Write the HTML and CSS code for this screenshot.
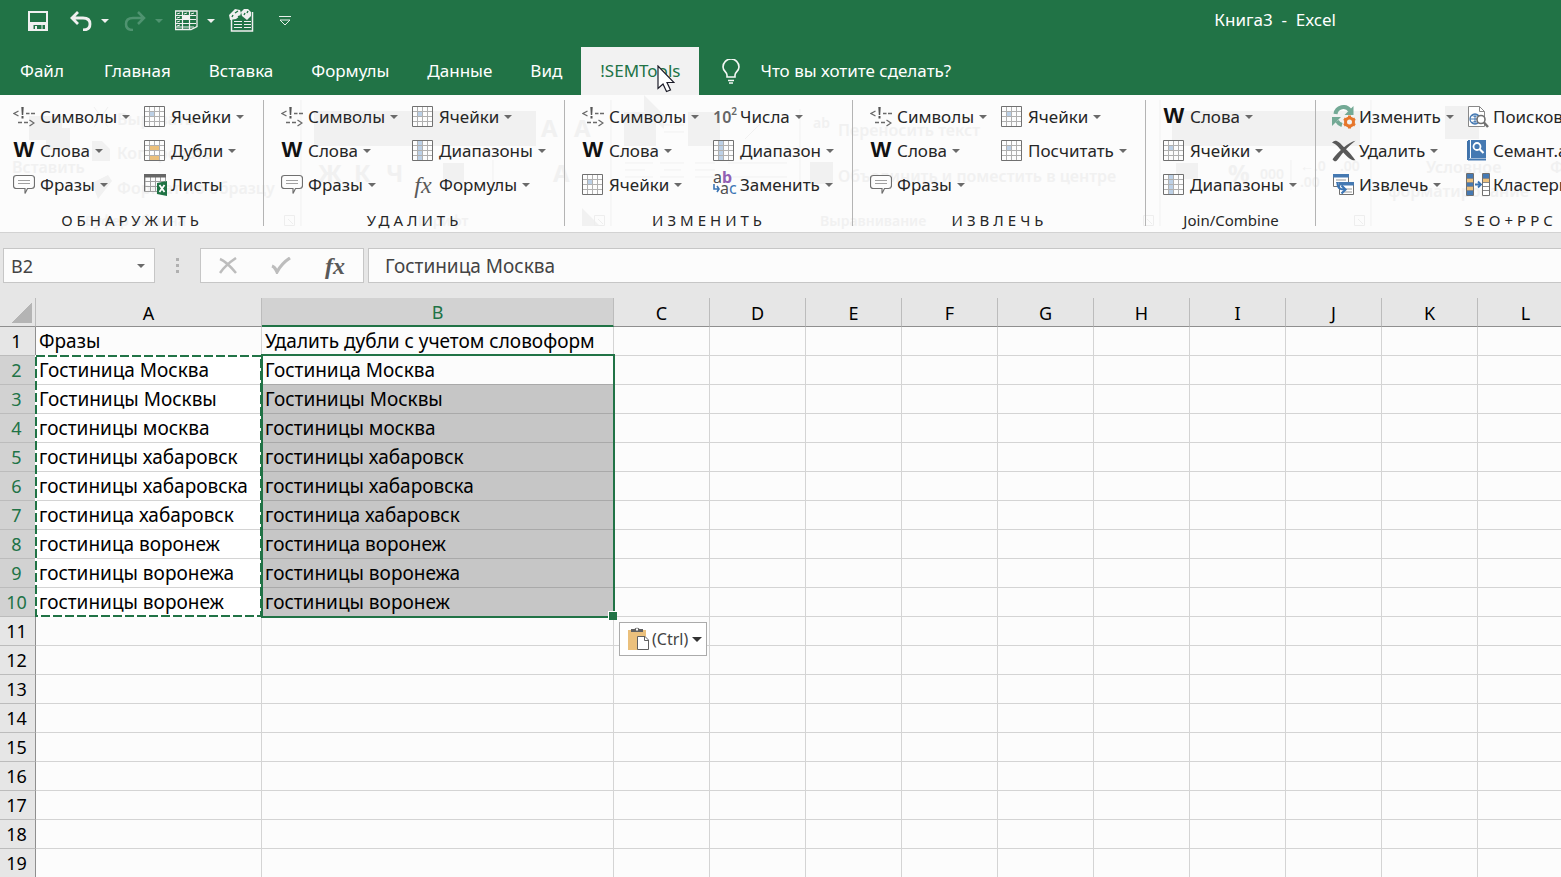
FILE: index.html
```html
<!DOCTYPE html>
<html lang="ru">
<head>
<meta charset="utf-8">
<title>Книга3 - Excel</title>
<link rel="stylesheet" href="styles.css">
</head>
<body>
<svg class="defs" aria-hidden="true">
  <symbol id="sym" viewBox="0 0 22 22"><path d="M5.500 5 1 7.500 5.500 10M13 7.500h3.500M18 7.500h4M5 16.500h4M11 16.500h4M16.500 14l4.500 3-4.500 3" fill="none" stroke="#6a6a6a" stroke-width="1.300"/><path d="M8.300 1h2.400l-.5 8H8.800zM8.500 10h2v2.500h-2z" fill="#555"/></symbol>
  <symbol id="cells" viewBox="0 0 22 22"><path d="M.5.500h20v20H.5z" fill="#fdfdfd"/><path d="M6 6h5v5H6z" fill="#bcd0e6"/><path d="M5.500 1v19M10.500 1v19M15.500 1v19M1 5.500h19M1 10.500h19M1 15.500h19" stroke="#b0b0b0"/><path d="M.5.500h20v20H.5z" fill="none" stroke="#707070"/></symbol>
  <symbol id="range" viewBox="0 0 22 22"><path d="M.5.500h20v20H.5z" fill="#fdfdfd"/><path d="M6 1h5v19H6z" fill="#bcd0e6"/><path d="M5.500 1v19M10.500 1v19M15.500 1v19M1 5.500h19M1 10.500h19M1 15.500h19" stroke="#b0b0b0"/><path d="M.5.500h20v20H.5z" fill="none" stroke="#707070"/></symbol>
  <symbol id="dupes" viewBox="0 0 22 22"><path d="M.5.500h20v20H.5z" fill="#fdfdfd"/><path d="M5.500 1v19M10.500 1v19M15.500 1v19M1 5.500h19M1 10.500h19M1 15.500h19" stroke="#b0b0b0"/><path d="M6 6h9v4H6zM6 16h9v4H6z" fill="#ebc07c"/><path d="M.5.500h20v20H.5z" fill="none" stroke="#707070"/></symbol>
  <symbol id="sheets" viewBox="0 0 24 24"><path d="M1 4v14.500h12M6.500 4v14M11.500 4v14M16.500 4v5M21.500 4v4M1 8.500h20M1 13.500h12" fill="none" stroke="#a0a0a0"/><path d="M.5 4v14.500" stroke="#707070"/><path d="M0 1h22v3.500H0z" fill="#666"/><path d="M13 10l10-2v15l-10-2z" fill="#1f7244"/><path d="M15.500 12l5 7M20.500 12l-5 7" stroke="#fff" stroke-width="1.800"/></symbol>
  <symbol id="note" viewBox="0 0 22 22"><path d="M3.500 1.500h15q3 0 3 3v7q0 3-3 3h-4l-2.500 5v-5h-8.500q-3 0-3-3v-7q0-3 3-3z" fill="#fdfdfd" stroke="#707070" stroke-width="1.200"/><path d="M5 6.500h12M5 9.500h12" stroke="#a0a0a0"/></symbol>
  <symbol id="recycle" viewBox="0 0 24 24"><path d="M3.500 9A8 8 0 0 1 18 5.500" fill="none" stroke="#73a995" stroke-width="4"/><path d="M21.500 1v9h-9z" fill="#73a995"/><path d="M10 20a9 9 0 0 1-5-4" fill="none" stroke="#73a995" stroke-width="4"/><path d="M0 12h9l-9 9z" fill="#73a995"/><circle cx="17.500" cy="17" r="4" fill="none" stroke="#e6762b" stroke-width="3"/><path d="M17.500 10.500v3M17.500 20.500v3M12 13.700l2.500 1.500M20.500 18.800l2.500 1.500M12 20.300l2.500-1.500M20.500 15.200l2.500-1.500" stroke="#e6762b" stroke-width="3"/></symbol>
  <symbol id="cross" viewBox="0 0 22 22"><path d="M0 3.500C3 0 5 1 12 8.500c6 6 8 9 9.500 11-4 .5-7-2.500-12-8C6 8 4 4.500 0 3.500z" fill="#595959"/><path d="M21.500 1.500C16 2 5 12 .5 18.500c2 3 3.500 2 5 0C9.500 12.500 15 6.500 21.500 1.500z" fill="#595959"/></symbol>
  <symbol id="extract" viewBox="0 0 24 24"><path d="M1.500 1.500h15v12h-15z" fill="#fff" stroke="#707070"/><path d="M1 1h16v3.500H1z" fill="#4579b2"/><path d="M4 7h10M4 9.500h10" stroke="#999"/><path d="M7.500 10.500h14v11h-14z" fill="#fff" stroke="#707070"/><path d="M7 9h15v3.500H7z" fill="#4579b2"/><path d="M14 16h6M12 19h8" stroke="#999"/><path d="M5.500 9c0 6 2 7.500 7 7.500M9.500 12.500l4 4-4 4" fill="none" stroke="#3a74b4" stroke-width="2.200"/></symbol>
  <symbol id="search" viewBox="0 0 24 24"><path d="M2.500 1.500h11l5 5v15h-16z" fill="#fff" stroke="#888"/><path d="M13.500 1.500v5h5" fill="none" stroke="#888"/><circle cx="9" cy="14" r="5" fill="none" stroke="#4579b2" stroke-width="1.300"/><path d="M4 14h10M9 9v10M6 10.500q3 2 6 0M6 17.500q3-2 6 0" fill="none" stroke="#4579b2"/><circle cx="15" cy="14.500" r="4" fill="#fff" stroke="#707070" stroke-width="1.600"/><path d="M18 17.500l4 4.500" stroke="#707070" stroke-width="2.500"/></symbol>
  <symbol id="book" viewBox="0 0 24 24"><path d="M2 1h18v18H2z" fill="#4579b2"/><path d="M1 2h2v19H1z" fill="#3f72aa"/><path d="M4.500 1v18" stroke="#fff"/><path d="M2 20.500h18" stroke="#4579b2" stroke-width="2"/><circle cx="11" cy="7.500" r="3.500" fill="none" stroke="#fff" stroke-width="1.800"/><path d="M13.500 10l4 4" stroke="#fff" stroke-width="2.200"/></symbol>
  <symbol id="cluster" viewBox="0 0 24 24"><path d="M1 1h7v21H1zM17 1h7v4h-7z" fill="#4579b2"/><path d="M1 5h7v4H1zM1 13h7v4H1zM17 5h7v4h-7z" fill="#ebc07c"/><path d="M17 9h7v13h-7z" fill="#fff"/><path d="M17 9.500h7M17 13.500h7M17 17.500h7M1 5.500h7M1 9.500h7M1 13.500h7M1 17.500h7M17 5.500h7" stroke="#888"/><path d="M.5.500h7v22h-7zM16.500.500h7v22h-7z" fill="none" stroke="#707070"/><path d="M9 11.500h5M12 8.500l3 3-3 3" fill="none" stroke="#3a74b4" stroke-width="1.800"/></symbol>
</svg>

<header class="titlebar">
  <div class="quick">
    <button class="q-save" aria-label="Сохранить"><svg width="20" height="20" viewBox="0 0 20 20"><path d="M1 1h18v18H1z" fill="none" stroke="#f0f0f0" stroke-width="2"/><path d="M1 11h18v8h-2v-5H5v5H1z" fill="#f0f0f0"/><path d="M5 19v-6h9v6" fill="none" stroke="#f0f0f0"/><path d="M7 15h2v4H7z" fill="#f0f0f0"/></svg></button>
    <button class="q-undo" aria-label="Отменить"><svg width="22" height="20" viewBox="0 0 22 20"><path d="M8 1 2 7l6 6M2.500 7H13q7 0 7 6 0 6-7 6" fill="none" stroke="#f0f0f0" stroke-width="2.800"/></svg><i class="caret"></i></button>
    <button class="q-redo" aria-label="Вернуть" disabled><svg width="22" height="20" viewBox="0 0 22 20"><path d="m14 1 6 6-6 6M19.500 7H9q-7 0-7 6 0 6 7 6" fill="none" stroke="#4f9370" stroke-width="2.500"/></svg><i class="caret"></i></button>
    <button class="q-table" aria-label="Таблица"><svg width="23" height="21" viewBox="0 0 23 21"><path d="M.5 1h21.500v15.500l-6 3H.5z" fill="none" stroke="#f0f0f0" stroke-width="1.300"/><path d="M7.500 1v18M14.500 1v18M1 5.500h20M1 9.500h20M1 13.500h20M1 17h18" stroke="#f0f0f0" stroke-width="1.200"/><path d="M8 5h6v4H8z" fill="#f0f0f0"/><path d="m2 4 3-1M2 8l3-1M2 12l3-1M2 16l3-1M9 4l3-1M16 4l3-1" stroke="#f0f0f0"/></svg><i class="caret"></i></button>
    <button class="q-find" aria-label="Найти"><svg width="25" height="23" viewBox="0 0 25 23"><path d="M2.500 10v12h21V3" fill="none" stroke="#f0f0f0" stroke-width="1.500"/><path d="M5 12.500h8M15 12.500h7M5 15.500h8M15 15.500h7M5 18.500h8M15 18.500h7" stroke="#f0f0f0" stroke-width="1.200"/><path d="M0 6 6 0l5 1 1 3-1 3-4 3-6 1zM12 3l3-3h4l3 3v4l-4 4-5-4z" fill="#f0f0f0"/><path d="m6 4 3-2M3 8l1-2M15 6l1-2M18 4l1-2M9 8l2-1" stroke="#217346" stroke-width="1.400"/></svg></button>
    <button class="q-more" aria-label="Настроить панель"><svg width="12" height="10" viewBox="0 0 12 10"><path d="M0 .5h12M1 4l5 5 5-5z" fill="none" stroke="#e8f0eb" stroke-width="1"/></svg></button>
  </div>
  <div class="doc-title">Книга3&nbsp; -&nbsp; Excel</div>
</header>

<nav class="tabs">
  <button class="tab file">Файл</button>
  <button class="tab">Главная</button>
  <button class="tab">Вставка</button>
  <button class="tab">Формулы</button>
  <button class="tab">Данные</button>
  <button class="tab">Вид</button>
  <button class="tab active">!SEMTools</button>
  <button class="tell"><svg width="18" height="25" viewBox="0 0 18 25"><path d="M5 18v-2c0-3-4-4-4-8a8 8 0 0 1 16 0c0 4-4 5-4 8v2zM6 21.500h6M7 24h4" fill="none" stroke="#f4f8f5" stroke-width="1.600"/></svg>Что вы хотите сделать?</button>
  <svg class="pointer" width="18" height="28" viewBox="0 0 18 28"><path d="M1 1v22.500l5-4.500 3.500 7.500 4-1.500-3.500-7.500h7z" fill="#fff" stroke="#1c1c28" stroke-width="1.200"/></svg>
</nav>

<section class="ribbon">
  <svg class="ghost" aria-hidden="true" width="1561" height="137" viewBox="0 0 1561 137">
    <path d="M29 21h33v12h8v22H46V45H29zM314 16h222v35H314zM624 17h32v34h-32zM688 17h32v34h-32zM1172 16h188v35h-188zM1445 11h34v33h-34zM443 68h21v20h-21zM810 67h23v22h-23zM92 46h10l8 8v12H92zM92 88l16-8 4 6-14 18zM644 0l20 20v14l-20-18zM582 113l18 18h-18zM1176 68h22v16h-22z"/>
    <path d="M94 12l14 20M108 12L94 32M301 5v126M611 5v126M1160 5v126M1371 5v126M493 65v30M800 14v80M1291 65v30M625 68h28M625 75h20M625 82h28M660 68h24M664 75h17M660 82h24M695 68h20M695 75h20M695 82h20M728 68h59M728 82h59M664 30h20M664 37h20M745 44l20-20" fill="none" stroke="#f1f1f1"/>
    <g fill="none" stroke="#eee"><path d="M284.500 120.500h10v10h-10zM288 124l5 5M594.500 120.500h10v10h-10zM598 124l5 5M1143.500 120.500h10v10h-10zM1147 124l5 5M1354.500 120.500h10v10h-10zM1358 124l5 5"/></g>
    <g class="ghost-text">
      <text x="12" y="78">Вставить</text><text x="117" y="30">Вырезать</text><text x="117" y="64">Копировать</text><text x="117" y="99">Формат по образцу</text>
      <text x="838" y="41">Переносить текст</text><text x="838" y="87">Объединить и поместить в центре</text><text x="1426" y="78">Условное</text><text x="1388" y="102">форматирование</text><text x="1550" y="78">Форматировать</text>
    </g>
    <g class="ghost-label"><text x="85" y="131">Буфер обмена</text><text x="418" y="131">Шрифт</text><text x="820" y="131">Выравнивание</text></g>
    <g class="ghost-big"><text x="318" y="87">Ж</text><text x="354" y="87">К</text><text x="386" y="87">Ч</text><text x="541" y="42">А</text><text x="574" y="42">А</text><text x="553" y="87">А</text><text x="1228" y="87">%</text></g>
    <g class="ghost-label"><text x="1260" y="84">000</text><text x="1300" y="76">←.0</text><text x="1300" y="92">.00</text><text x="1340" y="76">.00</text><text x="813" y="33">ab</text></g>
  </svg>

  <div class="group g-find">
    <div class="cmds">
      <button><svg class="ic"><use href="#sym"/></svg>Символы<i class="caret"></i></button>
      <button><svg class="ic"><use href="#cells"/></svg>Ячейки<i class="caret"></i></button>
      <button><b class="ic w">W</b>Слова<i class="caret"></i></button>
      <button><svg class="ic"><use href="#dupes"/></svg>Дубли<i class="caret"></i></button>
      <button><svg class="ic"><use href="#note"/></svg>Фразы<i class="caret"></i></button>
      <button><svg class="ic big"><use href="#sheets"/></svg>Листы</button>
    </div>
    <div class="label spaced">ОБНАРУЖИТЬ</div>
  </div>
  <div class="group g-del">
    <div class="cmds">
      <button><svg class="ic"><use href="#sym"/></svg>Символы<i class="caret"></i></button>
      <button><svg class="ic"><use href="#cells"/></svg>Ячейки<i class="caret"></i></button>
      <button><b class="ic w">W</b>Слова<i class="caret"></i></button>
      <button><svg class="ic"><use href="#range"/></svg>Диапазоны<i class="caret"></i></button>
      <button><svg class="ic"><use href="#note"/></svg>Фразы<i class="caret"></i></button>
      <button><em class="ic fx">fx</em>Формулы<i class="caret"></i></button>
    </div>
    <div class="label spaced">УДАЛИТЬ</div>
  </div>
  <div class="group g-edit">
    <div class="cmds">
      <button><svg class="ic"><use href="#sym"/></svg>Символы<i class="caret"></i></button>
      <button><span class="ic ten">10<sup>2</sup></span>Числа<i class="caret"></i></button>
      <button><b class="ic w">W</b>Слова<i class="caret"></i></button>
      <button><svg class="ic"><use href="#range"/></svg>Диапазон<i class="caret"></i></button>
      <button><svg class="ic"><use href="#cells"/></svg>Ячейки<i class="caret"></i></button>
      <button><span class="ic abac"><span>a<b>b</b></span><span><svg width="7" height="10" viewBox="0 0 7 10"><path d="M1 1v5h5M4 3l2 3-2 3" fill="none" stroke="#3a74b4" stroke-width="1.600"/></svg>a<i>c</i></span></span>Заменить<i class="caret"></i></button>
    </div>
    <div class="label spaced">ИЗМЕНИТЬ</div>
  </div>
  <div class="group g-extract">
    <div class="cmds">
      <button><svg class="ic"><use href="#sym"/></svg>Символы<i class="caret"></i></button>
      <button><svg class="ic"><use href="#cells"/></svg>Ячейки<i class="caret"></i></button>
      <button><b class="ic w">W</b>Слова<i class="caret"></i></button>
      <button><svg class="ic"><use href="#cells"/></svg>Посчитать<i class="caret"></i></button>
      <button><svg class="ic"><use href="#note"/></svg>Фразы<i class="caret"></i></button>
    </div>
    <div class="label spaced">ИЗВЛЕЧЬ</div>
  </div>
  <div class="group g-join">
    <div class="cmds">
      <button><b class="ic w">W</b>Слова<i class="caret"></i></button>
      <button><svg class="ic"><use href="#cells"/></svg>Ячейки<i class="caret"></i></button>
      <button><svg class="ic"><use href="#range"/></svg>Диапазоны<i class="caret"></i></button>
    </div>
    <div class="label">Join/Combine</div>
  </div>
  <div class="group g-seo">
    <div class="cmds">
      <button><svg class="ic big"><use href="#recycle"/></svg>Изменить<i class="caret"></i></button>
      <button><svg class="ic big"><use href="#search"/></svg>Поисковые<i class="caret"></i></button>
      <button><svg class="ic big"><use href="#cross"/></svg>Удалить<i class="caret"></i></button>
      <button><svg class="ic big"><use href="#book"/></svg>Семант.анализ<i class="caret"></i></button>
      <button><svg class="ic big"><use href="#extract"/></svg>Извлечь<i class="caret"></i></button>
      <button><svg class="ic big"><use href="#cluster"/></svg>Кластеризация<i class="caret"></i></button>
    </div>
    <div class="label spaced">SEO+PPC</div>
  </div>
</section>

<section class="formula-bar">
  <div class="name-box"><input aria-label="Имя" value="B2"><i class="caret"></i></div>
  <div class="dots"><i></i><i></i><i></i></div>
  <div class="fbtns">
    <button aria-label="Отмена"><svg width="18" height="17" viewBox="0 0 18 17"><path d="M1 2C6 4 12 10 17 16M17 1C11 5 5 10 1 16" fill="none" stroke="#bdbdbd" stroke-width="2.500"/></svg></button>
    <button aria-label="Ввод"><svg width="20" height="17" viewBox="0 0 20 17"><path d="M1 9q3 1 5 6Q11 6 19 1" fill="none" stroke="#bdbdbd" stroke-width="3.200"/></svg></button>
    <button aria-label="Вставить функцию" class="fx bold">fx</button>
  </div>
  <input class="formula" aria-label="Строка формул" value="Гостиница Москва">
</section>

<main class="sheet">
<table>
<colgroup><col class="c-num"><col class="c-a"><col class="c-b"><col><col><col><col><col><col><col><col><col><col></colgroup>
<thead><tr><th class="corner"></th><th>A</th><th class="sel">B</th><th>C</th><th>D</th><th>E</th><th>F</th><th>G</th><th>H</th><th>I</th><th>J</th><th>K</th><th>L</th></tr></thead>
<tbody>
<tr><th>1</th><td>Фразы</td><td>Удалить дубли с учетом словоформ</td><td></td><td></td><td></td><td></td><td></td><td></td><td></td><td></td><td></td><td></td></tr>
<tr class="on first"><th>2</th><td>Гостиница Москва</td><td>Гостиница Москва</td><td></td><td></td><td></td><td></td><td></td><td></td><td></td><td></td><td></td><td></td></tr>
<tr class="on"><th>3</th><td>Гостиницы Москвы</td><td>Гостиницы Москвы</td><td></td><td></td><td></td><td></td><td></td><td></td><td></td><td></td><td></td><td></td></tr>
<tr class="on"><th>4</th><td>гостиницы москва</td><td>гостиницы москва</td><td></td><td></td><td></td><td></td><td></td><td></td><td></td><td></td><td></td><td></td></tr>
<tr class="on"><th>5</th><td>гостиницы хабаровск</td><td>гостиницы хабаровск</td><td></td><td></td><td></td><td></td><td></td><td></td><td></td><td></td><td></td><td></td></tr>
<tr class="on"><th>6</th><td>гостиницы хабаровска</td><td>гостиницы хабаровска</td><td></td><td></td><td></td><td></td><td></td><td></td><td></td><td></td><td></td><td></td></tr>
<tr class="on"><th>7</th><td>гостиница хабаровск</td><td>гостиница хабаровск</td><td></td><td></td><td></td><td></td><td></td><td></td><td></td><td></td><td></td><td></td></tr>
<tr class="on"><th>8</th><td>гостиница воронеж</td><td>гостиница воронеж</td><td></td><td></td><td></td><td></td><td></td><td></td><td></td><td></td><td></td><td></td></tr>
<tr class="on"><th>9</th><td>гостиницы воронежа</td><td>гостиницы воронежа</td><td></td><td></td><td></td><td></td><td></td><td></td><td></td><td></td><td></td><td></td></tr>
<tr class="on"><th>10</th><td>гостиницы воронеж</td><td>гостиницы воронеж</td><td></td><td></td><td></td><td></td><td></td><td></td><td></td><td></td><td></td><td></td></tr>
<tr><th>11</th><td></td><td></td><td></td><td></td><td></td><td></td><td></td><td></td><td></td><td></td><td></td><td></td></tr>
<tr><th>12</th><td></td><td></td><td></td><td></td><td></td><td></td><td></td><td></td><td></td><td></td><td></td><td></td></tr>
<tr><th>13</th><td></td><td></td><td></td><td></td><td></td><td></td><td></td><td></td><td></td><td></td><td></td><td></td></tr>
<tr><th>14</th><td></td><td></td><td></td><td></td><td></td><td></td><td></td><td></td><td></td><td></td><td></td><td></td></tr>
<tr><th>15</th><td></td><td></td><td></td><td></td><td></td><td></td><td></td><td></td><td></td><td></td><td></td><td></td></tr>
<tr><th>16</th><td></td><td></td><td></td><td></td><td></td><td></td><td></td><td></td><td></td><td></td><td></td><td></td></tr>
<tr><th>17</th><td></td><td></td><td></td><td></td><td></td><td></td><td></td><td></td><td></td><td></td><td></td><td></td></tr>
<tr><th>18</th><td></td><td></td><td></td><td></td><td></td><td></td><td></td><td></td><td></td><td></td><td></td><td></td></tr>
<tr><th>19</th><td></td><td></td><td></td><td></td><td></td><td></td><td></td><td></td><td></td><td></td><td></td><td></td></tr>
</tbody>
</table>
<svg class="ants" width="227" height="262" viewBox="0 0 227 262"><path d="M1 1h225v260H1z" fill="none" stroke="#fff" stroke-width="2"/><path d="M1 1h225v260H1z" fill="none" stroke="#217346" stroke-width="2" stroke-dasharray="9 3"/></svg>
<div class="selection"></div>
<button class="paste"><svg width="23" height="24" viewBox="0 0 23 24"><path d="M1 3h18v20H1z" fill="#ebc07c"/><path d="M4 5V2h3.500a3 3 0 0 1 5 0H16v3z" fill="#606060"/><path d="M9 1.500h2v2H9z" fill="#fff"/><path d="M10.500 9.500h7.500l3.500 3.500v9.500h-11z" fill="#fff" stroke="#606060"/><path d="M17.500 9.500v4h4" fill="none" stroke="#606060"/></svg>(Ctrl)<i class="caret"></i></button>
</main>
</body>
</html>
```
FILE: styles.css
```css
* { box-sizing: border-box; }
body {
  margin: 0;
  height: 100vh;
  display: flex;
  flex-direction: column;
  overflow: hidden;
  background: #e6e6e6;
  color: #262626;
  font: 17px/24px "Noto Sans", "Open Sans", sans-serif;
}
button, input { font: inherit; color: inherit; border: 0; padding: 0; background: none; margin: 0; }
button { display: flex; align-items: center; white-space: nowrap; }
svg { display: block; flex: none; }
.defs { position: absolute; width: 0; height: 0; }
.caret {
  flex: none;
  border: 4px solid transparent;
  border-top-color: #6a6a6a;
  border-bottom: 0;
}

.titlebar { flex: none; display: flex; justify-content: space-between; align-items: center; height: 47px; padding: 0 225px 6px 28px; background: #217346; color: #fff; }
.doc-title { padding-bottom: 2px; }
.quick { display: flex; align-items: center; }
.quick .caret { border-top-color: #f0f0f0; margin-left: 9px; }
.q-undo { margin-left: 22px; }
.q-redo { margin-left: 15px; }
.quick .q-redo .caret { border-top-color: #4f9370; }
.q-table { margin-left: 12px; }
.q-find { margin-left: 14px; }
.q-more { margin-left: 25px; }

.tabs { flex: none; position: relative; display: flex; height: 48px; background: #217346; color: #fff; }
.tab { padding: 0 19px; }
.file { padding-left: 20px; margin-right: 2px; }
.active { background: #f2f2f2; color: #217346; }
.tell { gap: 20px; margin-left: 23px; }
.pointer { position: absolute; left: 657px; top: 18px; z-index: 3; }

.ribbon { flex: none; position: relative; display: flex; height: 138px; background: #fcfcfc; border-bottom: 1px solid #d2d2d2; overflow: hidden; }
.ghost { position: absolute; left: 0; top: 0; fill: #f1f1f1; }
.ghost-text { font-size: 16px; font-weight: 600; }
.ghost-label { font-size: 14px; font-weight: 600; }
.ghost-big { font-size: 24px; font-weight: 700; }
.group { position: relative; flex: none; display: flex; flex-direction: column; padding: 5px 0 0 17px; }
.group::after { content: ""; position: absolute; right: 0; top: 5px; bottom: 6px; width: 1px; background: #b4b4b4; }
.cmds { display: grid; grid-template-columns: 131px auto; grid-auto-rows: 34px; justify-content: start; height: 102px; }
.cmds button { gap: 5px; }
.ic { flex: none; width: 22px; height: 22px; font-style: normal; overflow: visible; }
.cmds .big { width: 24px; height: 24px; margin-right: -2px; }
.label { margin-left: -17px; text-align: center; font-size: 15px; line-height: 22px; padding-top: 7px; }
.spaced { letter-spacing: 4px; }
.g-find { width: 264px; padding-left: 13px; }
.g-find .label { margin-left: -13px; }
.g-del { width: 301px; }
.g-edit { width: 288px; }
.g-extract { width: 293px; }
.g-join { width: 170px; }
.g-join .cmds { grid-template-columns: auto; }
.g-seo { width: 390px; padding-left: 16px; }
.g-seo .cmds { grid-template-columns: 134px auto; }
.w { font: 700 22px/20px "Liberation Sans", sans-serif; color: #111; }
.fx { font: italic 400 24px/22px "Liberation Serif", serif; color: #595959; }
.bold { font-weight: 700; }
.ten { font-size: 16px; line-height: 22px; font-weight: 600; color: #666; display: flex; }
.ten sup { font-size: 10px; line-height: 10px; }
.abac { display: flex; flex-direction: column; height: 26px; font-size: 16px; line-height: 11px; color: #505050; }
.abac span { display: flex; }
.abac b { color: #9260b5; }
.abac i { color: #3a74b4; font-style: normal; }

.formula-bar { flex: none; display: flex; padding: 15px 0 15px 3px; height: 65px; color: #444; font-size: 18px; }
.formula-bar > * { background: #fcfcfc; border: 1px solid #c6c6c6; height: 35px; }
.name-box { display: flex; align-items: center; width: 152px; padding: 0 9px 0 7px; }
.name-box input { flex: 1; min-width: 0; }
.formula-bar .dots { width: 45px; display: flex; flex-direction: column; align-items: center; justify-content: center; gap: 3px; background: none; border: 0; }
.dots i { width: 3px; height: 3px; background: #b0b0b0; }
.fbtns { display: flex; width: 164px; padding: 0 18px; justify-content: space-between; }
.formula { flex: 1; min-width: 0; margin-left: 4px; padding-left: 16px; font-size: 19px; }
.formula-bar .formula { border-right: 0; }

.sheet { flex: 1; min-height: 0; position: relative; overflow: hidden; color: #000; font-size: 19px; line-height: 28px; }
table { table-layout: fixed; width: 1574px; border-collapse: separate; border-spacing: 0; }
col { width: 96px; }
.c-num { width: 36px; }
.c-a { width: 226px; }
.c-b { width: 352px; }
th, td { height: 29px; padding: 0; border: solid #d4d4d4; border-width: 0 1px 1px 0; white-space: nowrap; overflow: hidden; }
td { background: #fcfcfc; padding-left: 3px; }
th { font-weight: 400; font-size: 18px; background: #e6e6e6; border-color: #bcbcbc #8f8f8f #bcbcbc #bcbcbc; padding-right: 2px; }
thead th { border-color: #bcbcbc #bcbcbc #8f8f8f; padding: 2px 0 0; line-height: 25px; }
thead .sel { background: #d2d2d2; color: #217346; border-bottom: 2px solid #217346; }
.corner { background: linear-gradient(135deg, transparent 50%, #b4b4b4 50%) 11px 5px / 21px 20px no-repeat #e6e6e6; }
.on th { background: #d2d2d2; color: #217346; }
.on td:nth-child(2) { background: #fff; }
.on td:nth-child(3) { background: #c6c6c6; border-bottom-color: #a9a9a9; }
.first td:nth-child(3) { background: #fcfcfc; }
.ants { position: absolute; left: 35px; top: 57px; }
.selection { position: absolute; left: 261px; top: 56px; width: 354px; height: 264px; border: 2px solid #217346; }
.selection::after { content: ""; position: absolute; right: -4px; bottom: -4px; width: 8px; height: 8px; background: #217346; border: solid #fff; border-width: 1px 0 0 1px; }
.paste { position: absolute; left: 619px; top: 324px; height: 34px; padding: 0 4px 0 7px; gap: 2px; background: #fff; border: 1px solid #ababab; color: #444; font-size: 16px; }
.paste .caret { border-width: 5px 5px 0; border-top-color: #333; margin-left: 2px; }
```
